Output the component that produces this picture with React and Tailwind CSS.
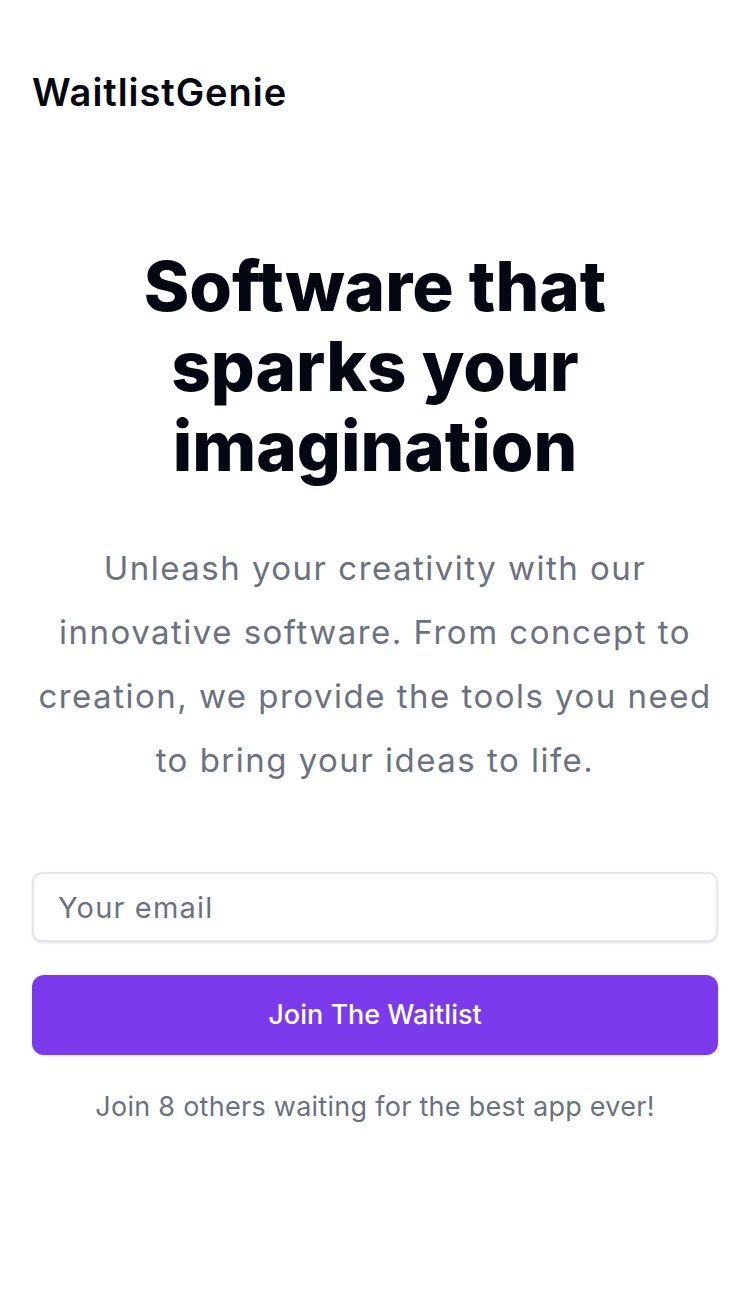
export default function App() {
  return (
    <div className="min-h-screen bg-white font-['Inter',sans-serif] text-[#030712]">
      {/* Header */}
      <header className="px-8 pt-[72px]">
        <span className="block text-[38px] leading-[40px] font-semibold tracking-[0.025em]">WaitlistGenie</span>
      </header>

      {/* Hero */}
      <main className="px-8 pt-[134px] flex flex-col items-center text-center">
        <h1 className="max-w-[560px] text-[69px] leading-[80px] font-extrabold">
          Software that sparks your imagination
        </h1>

        <p className="mt-[50px] max-w-[686px] text-[33px] leading-[64px] text-gray-500 tracking-[0.045em]">
          Unleash your creativity with our innovative software. From concept to creation, we provide the tools you need to bring your ideas to life.
        </p>

        {/* Form */}
        <form className="mt-[80px] w-full flex flex-col gap-[33px]" onSubmit={(e) => e.preventDefault()}>
          <input
            type="email"
            placeholder="Your email"
            className="h-[70px] w-full rounded-[10px] border-2 border-gray-200 bg-white px-6 text-[29px] tracking-[0.04em] text-gray-900 placeholder:text-gray-500 shadow-sm outline-none"
          />
          <button
            type="submit"
            className="h-[80px] w-full rounded-[12px] bg-[#7c3aed] text-white text-[27px] font-medium shadow-sm"
          >
            Join The Waitlist
          </button>
        </form>

        <p className="mt-[34px] text-[27px] leading-[36px] tracking-[0.01em] text-gray-500">
          Join 8 others waiting for the best app ever!
        </p>
      </main>
    </div>
  );
}
